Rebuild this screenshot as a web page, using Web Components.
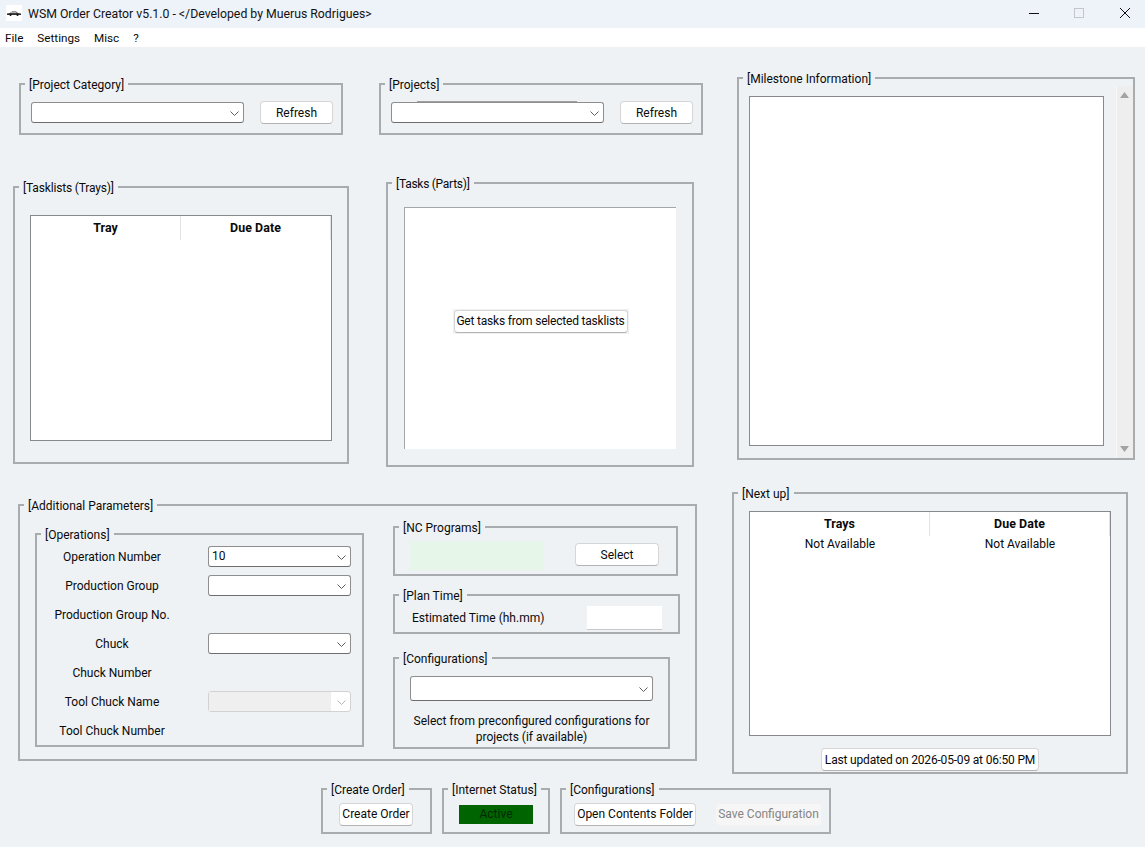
<!DOCTYPE html>
<html>
<head>
<meta charset="utf-8">
<title>WSM Order Creator</title>
<style>
  html, body { margin: 0; padding: 0; background: #eff2f5; }
  body { font: 12px Roboto, "Liberation Sans", sans-serif; color: #0a0a0a; }
</style>
</head>
<body>
<wsm-app></wsm-app>
<script>
customElements.define('title-bar', class TitleBar extends HTMLElement {
  constructor() {
    super();
    this.attachShadow({mode: 'open'})
    this.shadowRoot.innerHTML = `<style>
      :host { display: flex; align-items: center; height: 28px; background: #eef2f9; padding-left: 6px; flex: none; }
      .logo { display: block; margin-right: 6px; margin-top: -2px; }
      .text { flex: 1; font-size: 12.28px; color: #111; margin-top: -1px; }
      .ctl { display: flex; }
      .ctl svg { display: block; width: 46px; height: 20px; margin-top: -2px; }
    </style>
    <svg class="logo" width="16" height="16" viewBox="0 0 16 16">
      <rect width="16" height="16" fill="#fff"/>
      <path d="M1 8.5 4 8 6 6.5h4L12 8l3 .5V10H1z" fill="#333"/>
      <path d="M5 7.6h5.5" stroke="#fff" stroke-width=".7"/>
      <circle cx="4.5" cy="10" r="1" fill="#111"/><circle cx="11.5" cy="10" r="1" fill="#111"/>
    </svg>
    <span class="text"><slot></slot></span>
    <div class="ctl">
      <svg viewBox="0 0 46 20"><path d="M22 10.5h10" stroke="#111" stroke-width="1"/></svg>
      <svg viewBox="0 0 46 20"><rect x="21.5" y="5.5" width="9" height="9" fill="none" stroke="#c4c6c9" stroke-width="1"/></svg>
      <svg viewBox="0 0 46 20"><path d="M21 5l10 10M31 5 21 15" stroke="#111" stroke-width="1"/></svg>
    </div>`
  }
});

customElements.define('menu-bar', class MenuBar extends HTMLElement {
  constructor() {
    super();
    this.attachShadow({mode: 'open'})
    this.shadowRoot.innerHTML = `<style>
      :host { display: flex; gap: 14px; height: 19px; line-height: 20px; padding-left: 5px; font-size: 11.7px; background: #fff; flex: none; }
    </style><slot></slot>`
  }
});

customElements.define('group-box', class GroupBox extends HTMLElement {
  constructor() {
    super();
    this.attachShadow({mode: 'open'})
    this.shadowRoot.innerHTML = `<style>
      :host { display: block; position: relative; box-sizing: border-box; border: 2px solid #a9acaf; flex: none; }
      .label { position: absolute; top: -7px; left: 4px; padding: 0 4px; height: 15px; line-height: 15px; background: #eff2f5; white-space: nowrap; letter-spacing: var(--label-spacing, 0); }
    </style>
    <div class="label"></div>
    <slot></slot>`
  }
  connectedCallback() {
    this.shadowRoot.querySelector('.label').textContent = this.getAttribute('label')
  }
});

customElements.define('combo-box', class ComboBox extends HTMLElement {
  constructor() {
    super();
    this.attachShadow({mode: 'open'})
    this.shadowRoot.innerHTML = `<style>
      :host { display: flex; align-items: center; box-sizing: border-box; height: 21px; background: #fff; border: 1px solid #8e8e8e; border-bottom-color: #6e6e6e; border-radius: 3px; padding-left: 3px; flex: none; }
      :host([disabled]) { border-color: #d2d2d2; padding-left: 0; }
      .value { flex: 1; align-self: stretch; line-height: 19px; text-align: left; }
      :host([disabled]) .value { background: #efefef; }
      svg { display: block; width: 9px; height: 5px; margin: 1px 4px 0 6px; }
      path { fill: none; stroke: #5c5c5c; stroke-width: 1; }
      :host([disabled]) path { stroke: #b5b5b5; }
    </style>
    <span class="value"></span>
    <svg viewBox="0 0 9 5"><path d="M.5.5l4 4 4-4"/></svg>`
  }
  connectedCallback() {
    this.shadowRoot.querySelector('.value').textContent = this.getAttribute('value') || ''
  }
});

customElements.define('push-button', class PushButton extends HTMLElement {
  constructor() {
    super();
    this.attachShadow({mode: 'open'})
    this.shadowRoot.innerHTML = `<style>
      :host { display: flex; align-items: center; justify-content: center; box-sizing: border-box; height: 23px; background: #fff; border: 1px solid #d6d6d6; border-bottom-color: #b4b4b4; border-radius: 4px; white-space: nowrap; flex: none; }
      :host([disabled]) { background: #f6f6f6; border-color: #f1f1f1; color: #858585; }
    </style><slot></slot>`
  }
});

customElements.define('data-table', class DataTable extends HTMLElement {
  constructor() {
    super();
    this.attachShadow({mode: 'open'})
    this.shadowRoot.innerHTML = `<style>
      :host { display: block; box-sizing: border-box; background: #fff; border: 1px solid #868a8e; flex: none; }
      .head { display: grid; grid-template-columns: 1fr 1fr; height: 24px; line-height: 24px; font-size: 12.4px; letter-spacing: .08px; font-weight: 700; text-align: center; }
      .head span { border-right: 1px solid #e3e3e3; }
      .row { display: grid; grid-template-columns: 1fr 1fr; height: 16px; line-height: 16px; text-align: center; }
    </style>
    <div class="head"></div>
    <div class="row" hidden></div>`
  }
  connectedCallback() {
    const head = this.shadowRoot.querySelector('.head')
    for (const col of this.getAttribute('columns').split('|')) {
      const el = document.createElement('span')
      el.textContent = col
      head.appendChild(el)
    }
    const cells = this.getAttribute('row')
    if (cells) {
      const row = this.shadowRoot.querySelector('.row')
      row.hidden = false
      for (const cell of cells.split('|')) {
        const el = document.createElement('span')
        el.textContent = cell
        row.appendChild(el)
      }
    }
  }
});

customElements.define('scroll-track', class ScrollTrack extends HTMLElement {
  constructor() {
    super();
    this.attachShadow({mode: 'open'})
    this.shadowRoot.innerHTML = `<style>
      :host { display: flex; flex-direction: column; justify-content: space-between; width: 17px; box-sizing: border-box; background: #eeeeee; border-left: 1px solid #f8f8f8; padding: 6px 3px 6px 3px; flex: none; }
      svg { display: block; width: 9px; height: 6px; }
    </style>
    <svg viewBox="0 0 9 6"><path d="M4.5 0 9 6H0z" fill="#a3a3a3"/></svg>
    <svg viewBox="0 0 9 6"><path d="M0 0h9L4.5 6z" fill="#a3a3a3"/></svg>`
  }
});

customElements.define('wsm-app', class WsmApp extends HTMLElement {
  constructor() {
    super();
    this.attachShadow({mode: 'open'})
    this.shadowRoot.innerHTML = this.template
  }
  get template() {
    return `<style>
      :host { display: flex; flex-direction: column; width: 1145px; height: 847px; overflow: hidden; background: #eff2f5; }
      .main { display: flex; flex: none; }
      .left { width: 732px; flex: none; }
      .right { flex: 1; padding-top: 30px; }
      .row { display: flex; align-items: flex-start; }
      .inline { display: flex; align-items: center; }

      .top { margin: 36px 0 0 19px; gap: 36px; }
      .top group-box { width: 324px; height: 52px; padding: 16px 0 0 10px; }
      .top .inline { gap: 16px; }
      .top combo-box { width: 213px; }
      .top push-button { width: 73px; }
      .stray { position: absolute; left: 36px; top: 16px; width: 160px; height: 1px; background: #a0a0a0; }

      .mid { margin: 47px 0 0 13px; gap: 37px; height: 285px; }
      #tasklists { width: 336px; height: 278px; margin-top: 4px; padding: 27px 0 0 15px; --label-spacing: -.17px; }
      #tasklists data-table { width: 302px; height: 226px; }
      #tasks { width: 308px; height: 285px; padding: 23px 0 0 16px; --label-spacing: -.27px; }
      .sunken { display: flex; align-items: center; justify-content: center; width: 272px; height: 242px; padding-bottom: 15px; background: #fff; border: solid #a5a5a5; border-width: 1px 0 0 1px; box-sizing: border-box; }
      .halo { display: flex; padding: 1px; background: #f0f0f0; }
      .halo push-button { width: 174px; letter-spacing: -.2px; }

      #additional { width: 679px; height: 257px; margin: 37px 0 0 18px; padding: 0 0 0 15px; display: flex; }
      #operations { width: 329px; height: 214px; margin-top: 27px; padding-top: 7px; }
      .form { display: grid; grid-template-columns: 150px 143px; grid-auto-rows: 29px; column-gap: 21px; align-items: center; text-align: center; }
      .form combo-box { width: 143px; }
      .stack { margin: 20px 0 0 29px; display: flex; flex-direction: column; }
      #nc { width: 285px; height: 50px; padding: 13px 0 0 15px; }
      #nc .inline { gap: 31px; align-items: flex-start; }
      .green { width: 134px; height: 29px; background: #e6f7ea; }
      #nc push-button { width: 84px; margin-top: 2px; }
      #plan { width: 287px; height: 40px; margin-top: 18px; padding: 10px 0 0 17px; }
      #plan .inline { gap: 42px; }
      .field { width: 75px; height: 24px; box-sizing: border-box; background: #fff; border-bottom: 1px solid #c9c9c9; }
      #plan span { width: 133px; white-space: nowrap; }
      #config { width: 277px; height: 92px; margin-top: 23px; padding: 17px 0 0 15px; }
      #config combo-box { width: 243px; height: 25px; }
      .hint { width: 243px; margin-top: 13px; line-height: 15.5px; text-align: center; }

      #milestone { width: 398px; height: 383px; margin-left: 5px; padding: 7px 0 0 10px; display: flex; }
      .text { width: 355px; height: 350px; margin-top: 10px; box-sizing: border-box; background: #fff; border: 1px solid #868a8e; flex: none; }
      #milestone scroll-track { margin-left: 12px; height: 372px; }

      #next { width: 396px; height: 282px; margin-top: 32px; padding: 17px 0 0 15px; }
      #next data-table { width: 362px; height: 225px; }
      .stamp { display: flex; justify-content: center; margin: 12px 15px 0 0; }
      .stamp push-button { width: 218px; letter-spacing: -.18px; }

      .bottom { margin: 14px 0 0 321px; gap: 10px; }
      .bottom group-box { height: 46px; display: flex; align-items: center; padding-top: 6px; }
      #create { width: 111px; padding-left: 16px; }
      #create push-button { width: 74px; }
      #status { width: 108px; padding-left: 15px; }
      .active { width: 74px; height: 19px; line-height: 19px; text-align: center; background: #006400; color: #022802; }
      #folder { width: 271px; padding-left: 12px; gap: 19px; }
      #folder push-button:first-child { width: 122px; }
      #folder push-button:last-child { width: 107px; }
    </style>

    <title-bar>WSM Order Creator v5.1.0 - &lt;/Developed by Muerus Rodrigues&gt;</title-bar>
    <menu-bar><span>File</span><span>Settings</span><span>Misc</span><span>?</span></menu-bar>

    <div class="main">
      <div class="left">
        <div class="row top">
          <group-box label="[Project Category]">
            <div class="inline"><combo-box></combo-box><push-button>Refresh</push-button></div>
          </group-box>
          <group-box id="projects" label="[Projects]">
            <div class="stray"></div>
            <div class="inline"><combo-box></combo-box><push-button>Refresh</push-button></div>
          </group-box>
        </div>

        <div class="row mid">
          <group-box id="tasklists" label="[Tasklists (Trays)]">
            <data-table columns="Tray|Due Date"></data-table>
          </group-box>
          <group-box id="tasks" label="[Tasks (Parts)]">
            <div class="sunken"><div class="halo"><push-button>Get tasks from selected tasklists</push-button></div></div>
          </group-box>
        </div>

        <group-box id="additional" label="[Additional Parameters]">
          <group-box id="operations" label="[Operations]">
            <div class="form">
              <span>Operation Number</span><combo-box value="10"></combo-box>
              <span>Production Group</span><combo-box></combo-box>
              <span>Production Group No.</span><span></span>
              <span>Chuck</span><combo-box></combo-box>
              <span>Chuck Number</span><span></span>
              <span>Tool Chuck Name</span><combo-box disabled></combo-box>
              <span>Tool Chuck Number</span><span></span>
            </div>
          </group-box>
          <div class="stack">
            <group-box id="nc" label="[NC Programs]">
              <div class="inline"><div class="green"></div><push-button>Select</push-button></div>
            </group-box>
            <group-box id="plan" label="[Plan Time]">
              <div class="inline"><span>Estimated Time (hh.mm)</span><div class="field"></div></div>
            </group-box>
            <group-box id="config" label="[Configurations]">
              <combo-box></combo-box>
              <div class="hint">Select from preconfigured configurations for projects (if available)</div>
            </group-box>
          </div>
        </group-box>
      </div>

      <div class="right">
        <group-box id="milestone" label="[Milestone Information]">
          <div class="text"></div>
          <scroll-track></scroll-track>
        </group-box>
        <group-box id="next" label="[Next up]">
          <data-table columns="Trays|Due Date" row="Not Available|Not Available"></data-table>
          <div class="stamp"><push-button>Last updated on 2026-05-09 at 06:50 PM</push-button></div>
        </group-box>
      </div>
    </div>

    <div class="row bottom">
      <group-box id="create" label="[Create Order]"><push-button>Create Order</push-button></group-box>
      <group-box id="status" label="[Internet Status]"><div class="active">Active</div></group-box>
      <group-box id="folder" label="[Configurations]">
        <push-button>Open Contents Folder</push-button>
        <push-button disabled>Save Configuration</push-button>
      </group-box>
    </div>`
  }
});
</script>
</body>
</html>
